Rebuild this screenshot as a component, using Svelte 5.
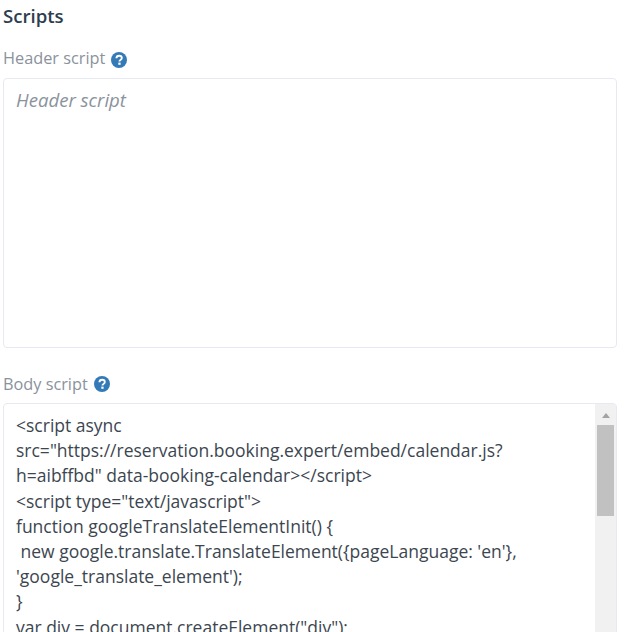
<script lang="ts">
    let bodyLines = [
        "<script async",
        'src="https://reservation.booking.expert/embed/calendar.js?',
        'h=aibffbd" data-booking-calendar></' + "script>",
        '<' + 'script type="text/javascript">',
        "function googleTranslateElementInit() {",
        " new google.translate.TranslateElement({pageLanguage: 'en'},",
        "'google_translate_element');",
        "}",
        'var div = document.createElement("div");',
    ];
</script>

<div class="page">
    <h3 class="title">Scripts</h3>

    <div class="label">
        Header script
        <svg class="help header-help" viewBox="0 0 16 16">
            <circle cx="8" cy="8" r="8" fill="#337ab7" />
            <path d="M5.4 6.2C5.5 4.6 6.6 3.7 8.1 3.7C9.7 3.7 10.8 4.6 10.8 5.9C10.8 7 10.2 7.5 9.4 8C8.7 8.4 8.5 8.7 8.5 9.5" fill="none" stroke="#fff" stroke-width="1.9" />
            <rect x="7.3" y="10.6" width="2.3" height="2.2" fill="#fff" />
        </svg>
    </div>
    <div class="box header-box">
        <span class="placeholder">Header script</span>
    </div>

    <div class="label body-label">
        Body script
        <svg class="help" viewBox="0 0 16 16">
            <circle cx="8" cy="8" r="8" fill="#337ab7" />
            <path d="M5.4 6.2C5.5 4.6 6.6 3.7 8.1 3.7C9.7 3.7 10.8 4.6 10.8 5.9C10.8 7 10.2 7.5 9.4 8C8.7 8.4 8.5 8.7 8.5 9.5" fill="none" stroke="#fff" stroke-width="1.9" />
            <rect x="7.3" y="10.6" width="2.3" height="2.2" fill="#fff" />
        </svg>
    </div>
    <div class="box body-box">
        <div class="code">
            {#each bodyLines as line}
                <div class="line">{line}</div>
            {/each}
        </div>
        <div class="scrollbar">
            <div class="arrow"></div>
            <div class="thumb"></div>
        </div>
    </div>
</div>

<style>
    :global(body) {
        background: #fff;
        overflow: hidden;
    }

    .page {
        width: 614px;
        height: 632px;
        padding-left: 3px;
        overflow: hidden;
        font-family: "Open Sans", sans-serif;
    }

    .title {
        margin: 0;
        padding-top: 3px;
        font-size: 18.6px;
        font-weight: 600;
        line-height: 25px;
        color: #2c3e50;
    }

    .label {
        display: flex;
        align-items: center;
        gap: 6px;
        margin-top: 18px;
        height: 24px;
        font-size: 16.3px;
        color: #8a929c;
    }

    .body-label {
        margin-top: 24px;
    }

    .help {
        width: 16px;
        height: 16px;
    }

    .header-help {
        margin-top: 4px;
    }

    .box {
        box-sizing: border-box;
        width: 614px;
        margin-top: 8px;
        border: 1px solid #e8e8f2;
        border-radius: 4px;
        background: #fff;
    }

    .header-box {
        height: 270px;
        padding: 8px 12px;
    }

    .placeholder {
        font-size: 18.6px;
        font-style: italic;
        line-height: 25px;
        color: #8a929c;
    }

    .body-box {
        height: 300px;
        margin-top: 7px;
        display: flex;
        overflow: hidden;
    }

    .code {
        flex: 1;
        padding: 9px 12px;
        font-size: 17.5px;
        line-height: 25.2px;
        color: #3c4650;
        white-space: pre;
    }

    .scrollbar {
        width: 21px;
        padding: 0 2px;
        box-sizing: border-box;
        background: #f1f1f1;
    }

    .arrow {
        width: 0;
        height: 0;
        margin: 9px auto 7px;
        border-left: 4.5px solid transparent;
        border-right: 4.5px solid transparent;
        border-bottom: 5px solid #a3a3a3;
    }

    .thumb {
        height: 91px;
        background: #c1c1c1;
    }
</style>
